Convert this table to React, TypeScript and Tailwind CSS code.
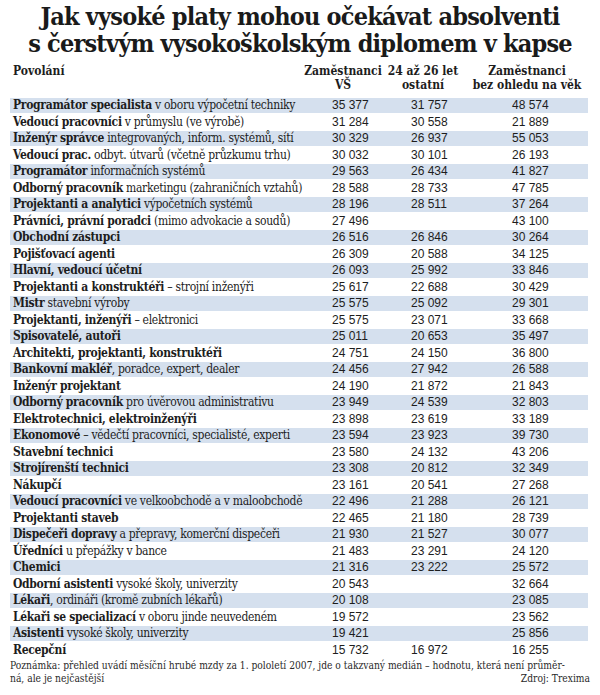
type Row = [string, string, string, string, string];

const rows: Row[] = [
  ["Programátor specialista", " v oboru výpočetní techniky", "35 377", "31 757", "48 574"],
  ["Vedoucí pracovníci", " v průmyslu (ve výrobě)", "31 284", "30 558", "21 889"],
  ["Inženýr správce", " integrovaných, inform. systémů, sítí", "30 329", "26 937", "55 053"],
  ["Vedoucí prac.", " odbyt. útvarů (včetně průzkumu trhu)", "30 032", "30 101", "26 193"],
  ["Programátor", " informačních systémů", "29 563", "26 434", "41 827"],
  ["Odborný pracovník", " marketingu (zahraničních vztahů)", "28 588", "28 733", "47 785"],
  ["Projektanti a analytici", " výpočetních systémů", "28 196", "28 511", "37 264"],
  ["Právníci, právní poradci", " (mimo advokacie a soudů)", "27 496", "", "43 100"],
  ["Obchodní zástupci", "", "26 516", "26 846", "30 264"],
  ["Pojišťovací agenti", "", "26 309", "20 588", "34 125"],
  ["Hlavní, vedoucí účetní", "", "26 093", "25 992", "33 846"],
  ["Projektanti a konstruktéři", " – strojní inženýři", "25 617", "22 688", "30 429"],
  ["Mistr", " stavební výroby", "25 575", "25 092", "29 301"],
  ["Projektanti, inženýři", " – elektronici", "25 575", "23 071", "33 668"],
  ["Spisovatelé, autoři", "", "25 011", "20 653", "35 497"],
  ["Architekti, projektanti, konstruktéři", "", "24 751", "24 150", "36 800"],
  ["Bankovní makléř", ", poradce, expert, dealer", "24 456", "27 942", "26 588"],
  ["Inženýr projektant", "", "24 190", "21 872", "21 843"],
  ["Odborný pracovník", " pro úvěrovou administrativu", "23 949", "24 539", "32 803"],
  ["Elektrotechnici, elektroinženýři", "", "23 898", "23 619", "33 189"],
  ["Ekonomové", " – vědečtí pracovníci, specialisté, experti", "23 594", "23 923", "39 730"],
  ["Stavební technici", "", "23 580", "24 132", "43 206"],
  ["Strojírenští technici", "", "23 308", "20 812", "32 349"],
  ["Nákupčí", "", "23 161", "20 541", "27 268"],
  ["Vedoucí pracovníci", " ve velkoobchodě a v maloobchodě", "22 496", "21 288", "26 121"],
  ["Projektanti staveb", "", "22 465", "21 180", "28 739"],
  ["Dispečeři dopravy", " a přepravy, komerční dispečeři", "21 930", "21 527", "30 077"],
  ["Úředníci", " u přepážky v bance", "21 483", "23 291", "24 120"],
  ["Chemici", "", "21 316", "23 222", "25 572"],
  ["Odborní asistenti", " vysoké školy, univerzity", "20 543", "", "32 664"],
  ["Lékaři", ", ordináři (kromě zubních lékařů)", "20 108", "", "23 085"],
  ["Lékaři se specializací", " v oboru jinde neuvedeném", "19 572", "", "23 562"],
  ["Asistenti", " vysoké školy, univerzity", "19 421", "", "25 856"],
  ["Recepční", "", "15 732", "16 972", "16 255"],
];

const slab = "font-['DejaVu_Serif_Condensed','DejaVu_Serif',serif]";
const sans = "font-['Liberation_Sans',Arial,sans-serif]";

export default function App() {
  return (
    <div className={`w-[600px] h-[695px] bg-white text-[#1d1d1d] ${slab} overflow-hidden`}>
      {/* Title */}
      <h1 className="pt-[3px] text-center text-[25px] leading-[27px] font-bold tracking-[-0.8px] text-[#1a1a1a]">
        <div>Jak vysoké platy mohou očekávat absolventi</div>
        <div>s čerstvým vysokoškolským diplomem v kapse</div>
      </h1>

      {/* Column headings */}
      <div className="mt-[7px] flex text-[12px] leading-[14px] font-bold">
        <div className="w-[300px] pl-[13px]">Povolání</div>
        <div className="w-[86px] text-center">
          Zaměstnanci
          <br />
          VŠ
        </div>
        <div className="w-[74px] text-center">
          24 až 26 let
          <br />
          ostatní
        </div>
        <div className="w-[134px] text-center">
          Zaměstnanci
          <br />
          bez ohledu na věk
        </div>
      </div>

      {/* Table rows */}
      <div className="mt-[5.5px] ml-[10px] w-[578px]">
        {rows.map((r, i) => (
          <div key={i} className="py-[0.75px]">
            <div
              className={`grid grid-cols-[322px_79px_101px_76px] h-[15px] items-center text-[12px] leading-[15px] ${
                i % 2 === 0 ? "bg-[#d5e0ee]" : ""
              }`}
            >
              <div className="pl-[3px] whitespace-nowrap tracking-[-0.3px]">
                <span className="font-bold">{r[0]}</span>
                <span>{r[1]}</span>
              </div>
              <div className={sans}>{r[2]}</div>
              <div className={sans}>{r[3]}</div>
              <div className={sans}>{r[4]}</div>
            </div>
          </div>
        ))}
      </div>

      {/* Footnote */}
      <div className="px-[10px] text-[10.2px] leading-[13px] text-[#2a2a2a]">
        <div className="whitespace-nowrap">
          Poznámka: přehled uvádí měsíční hrubé mzdy za 1. pololetí 2007, jde o takzvaný medián – hodnotu, která není průměr-
        </div>
        <div className="flex justify-between">
          <span>ná, ale je nejčastější</span>
          <span>Zdroj: Trexima</span>
        </div>
      </div>
    </div>
  );
}
